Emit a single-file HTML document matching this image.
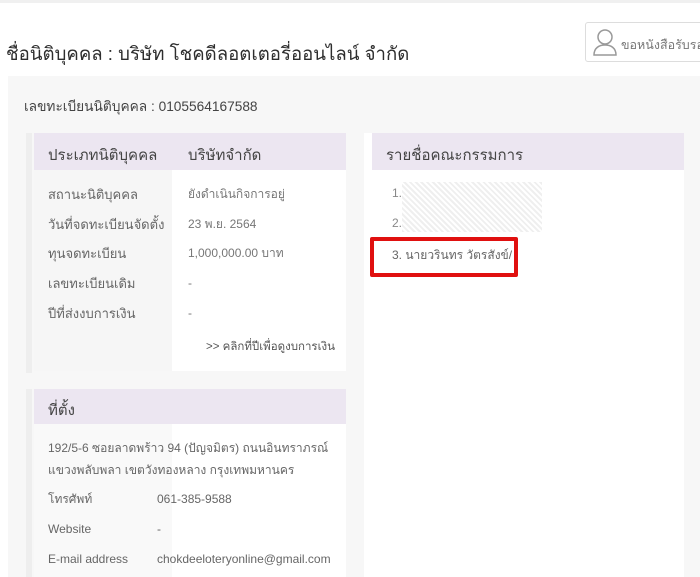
<html><head><style>
body{margin:0;width:700px;height:577px;overflow:hidden;background:#fff;font-family:"Liberation Sans","Noto Sans CJK SC",sans-serif;position:relative}
div{position:absolute;box-sizing:border-box}
.t{white-space:nowrap}
</style></head><body>
<div style="left:0;top:0;width:700px;height:3px;background:#f0f0f0"></div>
<div class="t" style="left:6px;top:40px;font-size:18.6px;color:#2e2e2e">ชื่อนิติบุคคล : บริษัท โชคดีลอตเตอรี่ออนไลน์ จำกัด</div>
<div style="left:585px;top:22px;width:120px;height:40px;border:1px solid #ddd;border-radius:3px;background:#fff"></div>
<svg style="position:absolute;left:592px;top:27px" width="26" height="30" viewBox="0 0 26 30"><circle cx="13" cy="10" r="7" fill="none" stroke="#999" stroke-width="1.5"/><path d="M2 28c0-7 5-10 11-10s11 3 11 10z" fill="none" stroke="#999" stroke-width="1.5"/></svg>
<div class="t" style="left:621px;top:35px;font-size:12.5px;color:#777">ขอหนังสือรับรอง</div>
<div style="left:8px;top:76px;width:692px;height:501px;background:#f7f7f7"></div>
<div class="t" style="left:24px;top:96px;font-size:13.7px;color:#444">เลขทะเบียนนิติบุคคล : 0105564167588</div>
<div style="left:26px;top:133px;width:6px;height:240px;background:#eee"></div>
<div style="left:34px;top:133px;width:312px;height:238px;background:#fff"></div>
<div style="left:34px;top:170px;width:138px;height:201px;background:#f6f6f6"></div>
<div style="left:34px;top:133px;width:312px;height:37px;background:#ece6f1"></div>
<div class="t" style="left:48px;top:143px;font-size:15px;color:#444">ประเภทนิติบุคคล</div>
<div class="t" style="left:188px;top:143px;font-size:15px;color:#444">บริษัทจำกัด</div>
<div class="t" style="left:48px;top:180px;font-size:13px;color:#666;line-height:29.7px">สถานะนิติบุคคล<br>วันที่จดทะเบียนจัดตั้ง<br>ทุนจดทะเบียน<br>เลขทะเบียนเดิม<br>ปีที่ส่งงบการเงิน</div>
<div class="t" style="left:188px;top:180px;font-size:12px;color:#777;line-height:29.7px">ยังดำเนินกิจการอยู่<br>23 พ.ย. 2564<br>1,000,000.00 บาท<br>-<br>-</div>
<div class="t" style="left:206px;top:338px;font-size:11.5px;color:#555">&gt;&gt; คลิกที่ปีเพื่อดูงบการเงิน</div>
<div style="left:364px;top:133px;width:320px;height:444px;background:#fff"></div>
<div style="left:372px;top:133px;width:312px;height:37px;background:#ece6f1"></div>
<div class="t" style="left:386px;top:143px;font-size:15px;color:#444">รายชื่อคณะกรรมการ</div>
<div class="t" style="left:392px;top:186px;font-size:12px;color:#888">1.</div>
<div style="left:402px;top:182px;width:140px;height:50px;background:repeating-linear-gradient(45deg,#e4e4e4 0 2px,#fff 2px 4px);opacity:.6"></div>
<div class="t" style="left:392px;top:216px;font-size:12px;color:#888">2.</div>
<div style="left:370px;top:237px;width:148px;height:40px;border:4px solid #e0100f;border-radius:2px"></div>
<div class="t" style="left:392px;top:246px;font-size:12px;color:#666">3. นายวรินทร วัตรสังข์/</div>
<div style="left:26px;top:389px;width:6px;height:188px;background:#eee"></div>
<div style="left:34px;top:389px;width:312px;height:188px;background:#fff"></div>
<div style="left:34px;top:389px;width:138px;height:188px;background:#f9f9f9"></div>
<div style="left:34px;top:389px;width:312px;height:35px;background:#ece6f1"></div>
<div class="t" style="left:48px;top:398px;font-size:15px;color:#444">ที่ตั้ง</div>
<div class="t" style="left:48px;top:437px;font-size:12px;color:#666;line-height:22px">192/5-6 ซอยลาดพร้าว 94 (ปัญจมิตร) ถนนอินทราภรณ์<br>แขวงพลับพลา เขตวังทองหลาง กรุงเทพมหานคร</div>
<div class="t" style="left:48px;top:484px;font-size:12px;color:#666;line-height:30px">โทรศัพท์<br>Website<br>E-mail address</div>
<div class="t" style="left:157px;top:484px;font-size:12px;color:#666;line-height:30px">061-385-9588<br>-<br>chokdeeloteryonline@gmail.com</div>
</body></html>
